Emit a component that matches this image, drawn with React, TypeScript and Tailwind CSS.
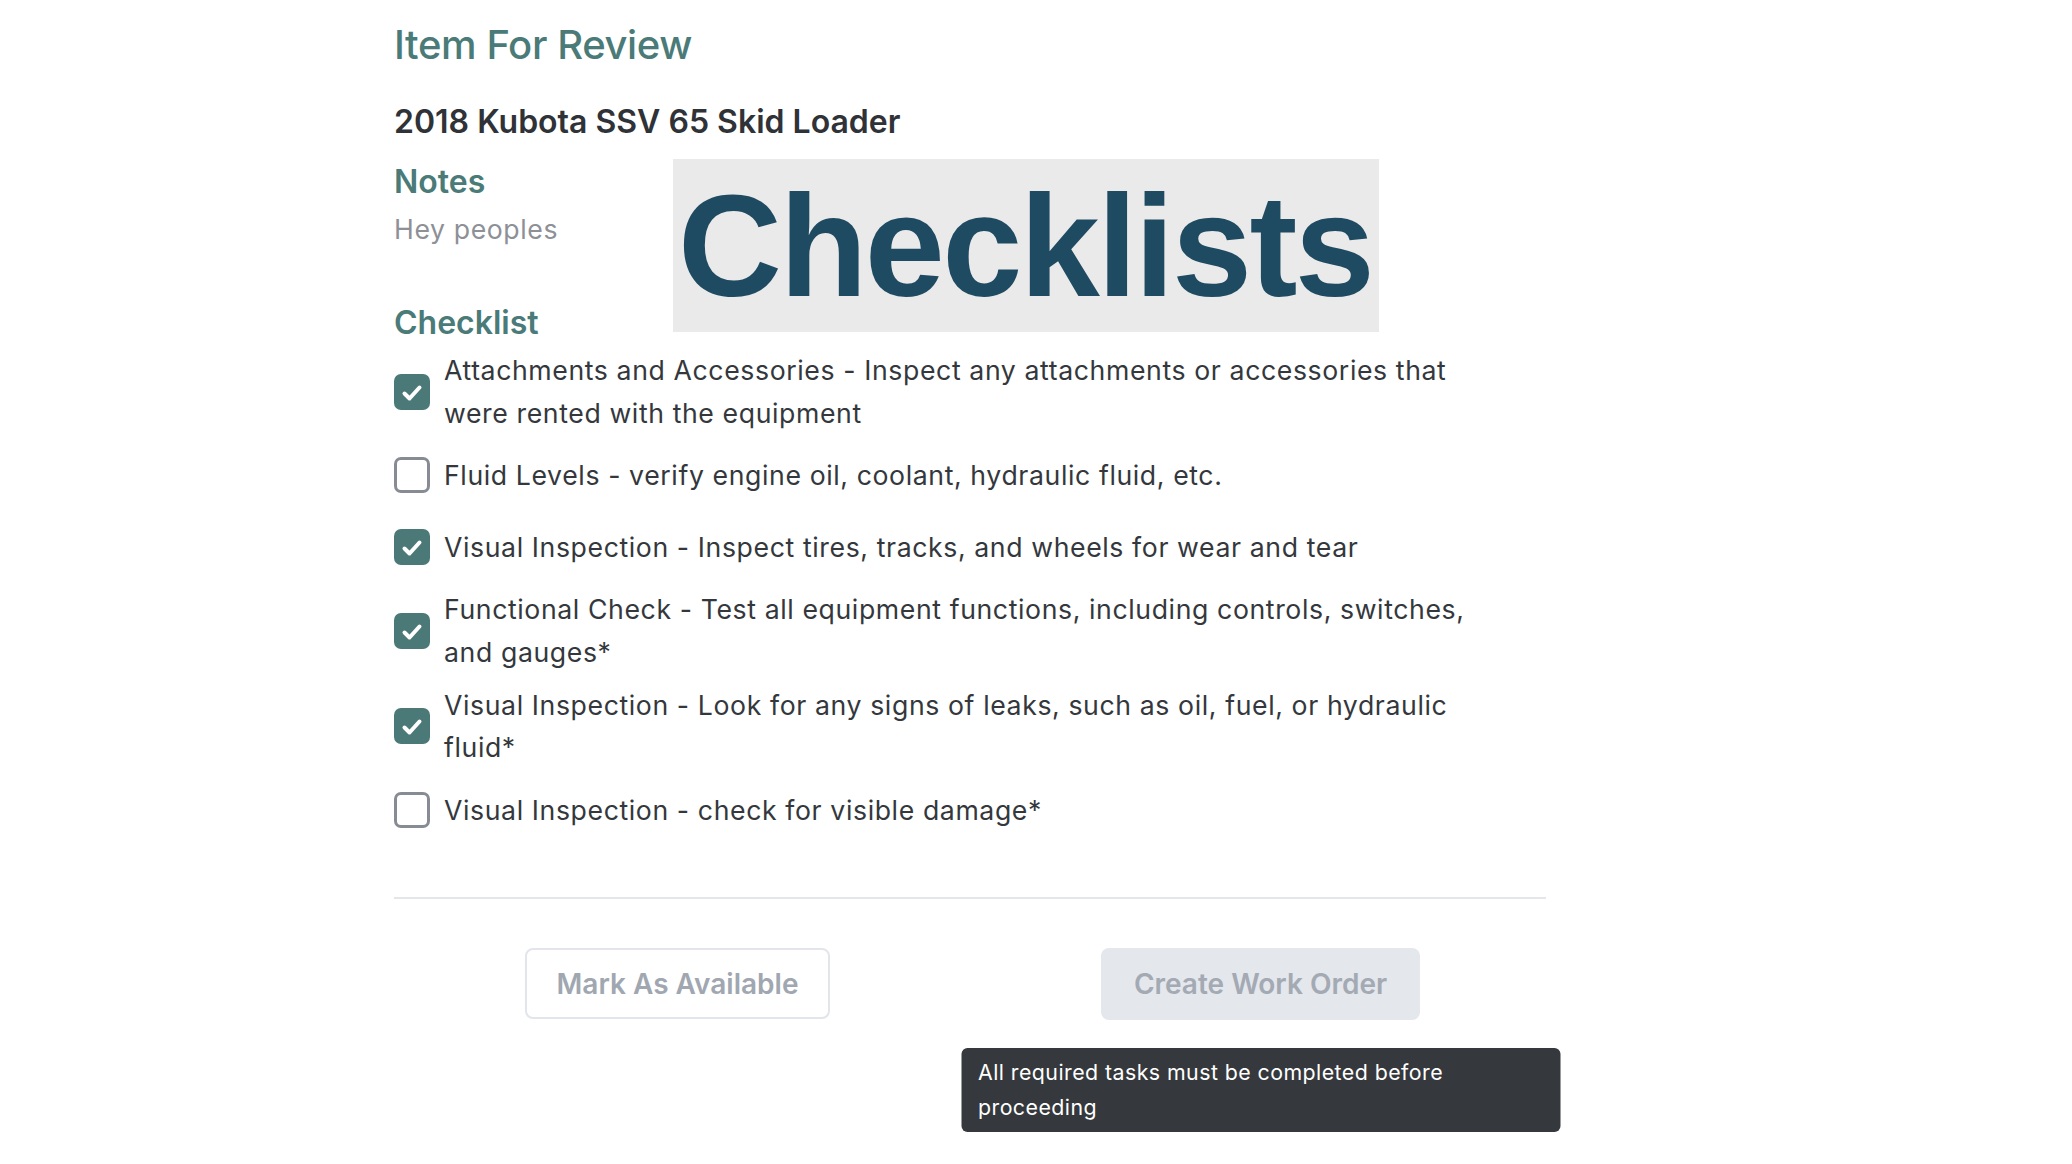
import { useState } from 'react'

interface Task {
  id: number
  text: string
  done: boolean
}

const initialTasks: Task[] = [
  { id: 1, text: 'Attachments and Accessories - Inspect any attachments or accessories that were rented with the equipment', done: true },
  { id: 2, text: 'Fluid Levels - verify engine oil, coolant, hydraulic fluid, etc.', done: false },
  { id: 3, text: 'Visual Inspection - Inspect tires, tracks, and wheels for wear and tear', done: true },
  { id: 4, text: 'Functional Check - Test all equipment functions, including controls, switches, and gauges*', done: true },
  { id: 5, text: 'Visual Inspection - Look for any signs of leaks, such as oil, fuel, or hydraulic fluid*', done: true },
  { id: 6, text: 'Visual Inspection - check for visible damage*', done: false },
]

function CheckBox({ checked, onClick }: { checked: boolean; onClick: () => void }) {
  return (
    <button
      onClick={onClick}
      className={`shrink-0 w-[36px] h-[36px] rounded-[7px] flex items-center justify-center cursor-pointer ${
        checked ? 'bg-[#4b7977]' : 'bg-white border-[3px] border-[#878c94]'
      }`}
    >
      {checked && (
        <svg viewBox="0 0 36 36" className="w-[36px] h-[36px]">
          <polyline points="10.5,19.5 15.5,24.5 25.5,13.5" fill="none" stroke="white" strokeWidth="4" strokeLinecap="round" strokeLinejoin="round" />
        </svg>
      )}
    </button>
  )
}

export default function App() {
  const [tasks, setTasks] = useState<Task[]>(initialTasks)

  const toggle = (id: number) => {
    setTasks(tasks.map(t => (t.id === id ? { ...t, done: !t.done } : t)))
  }

  return (
    <div className="min-h-screen bg-white font-['Inter',sans-serif]">
      <div className="relative ml-[394px] w-[1152px] pt-[21px] pb-[60px]">
        {/* header */}
        <h1 className="text-[40px] leading-[48px] font-medium tracking-[-0.4px] text-[#4a7b78]">Item For Review</h1>
        <h2 className="mt-[33px] text-[32px] leading-[40px] font-semibold text-[#2f3237]">2018 Kubota SSV 65 Skid Loader</h2>

        {/* notes */}
        <h3 className="mt-[20px] text-[32px] leading-[40px] font-semibold text-[#4a7b78]">Notes</h3>
        <p className="mt-[7px] text-[26.67px] leading-[40px] tracking-[0.6px] text-[#8d9096]">Hey peoples</p>

        {/* checklist */}
        <h3 className="mt-[54px] text-[32px] leading-[40px] font-semibold text-[#4a7b78]">Checklist</h3>
        <div className="mt-[6px] flex flex-col gap-[10px]">
          {tasks.map(t => (
            <div key={t.id} className="flex items-center gap-[14px] min-h-[62px]">
              <CheckBox checked={t.done} onClick={() => toggle(t.id)} />
              <span className="max-w-[1040px] text-[26.67px] leading-[42.67px] tracking-[0.6px] text-[#34383d]">{t.text}</span>
            </div>
          ))}
        </div>

        <div className="mt-[56px] h-[2px] bg-[#e4e6e9]" />

        {/* actions */}
        <div className="mt-[49px] flex items-start">
          <button className="ml-[131px] w-[305px] h-[71px] rounded-[8px] border-2 border-[#e2e5e9] bg-white text-[28px] font-semibold text-[#a0a7b1]">
            Mark As Available
          </button>
          <div className="relative ml-[271px]">
            <button className="w-[319px] h-[72px] rounded-[8px] bg-[#e4e7eb] text-[28px] font-semibold text-[#a3aab4]">
              Create Work Order
            </button>
            <div className="absolute top-full left-1/2 -translate-x-1/2 mt-[28px] w-[599px] rounded-[6px] bg-[#35383c] px-[17px] py-[7px] text-[21.33px] leading-[35px] tracking-[0.45px] text-white">
              All required tasks must be completed before proceeding
            </div>
          </div>
        </div>

        {/* banner image overlay */}
        <div className="absolute left-[279px] top-[159px] w-[706px] h-[173px] bg-[#eaeaea] pl-[5px] pt-[16px]">
          <span className="block font-['Liberation_Sans',Arial,sans-serif] font-bold text-[144px] leading-[144px] tracking-[-2.6px] text-[#1f4b62]">
            Checklists
          </span>
        </div>
      </div>
    </div>
  )
}
